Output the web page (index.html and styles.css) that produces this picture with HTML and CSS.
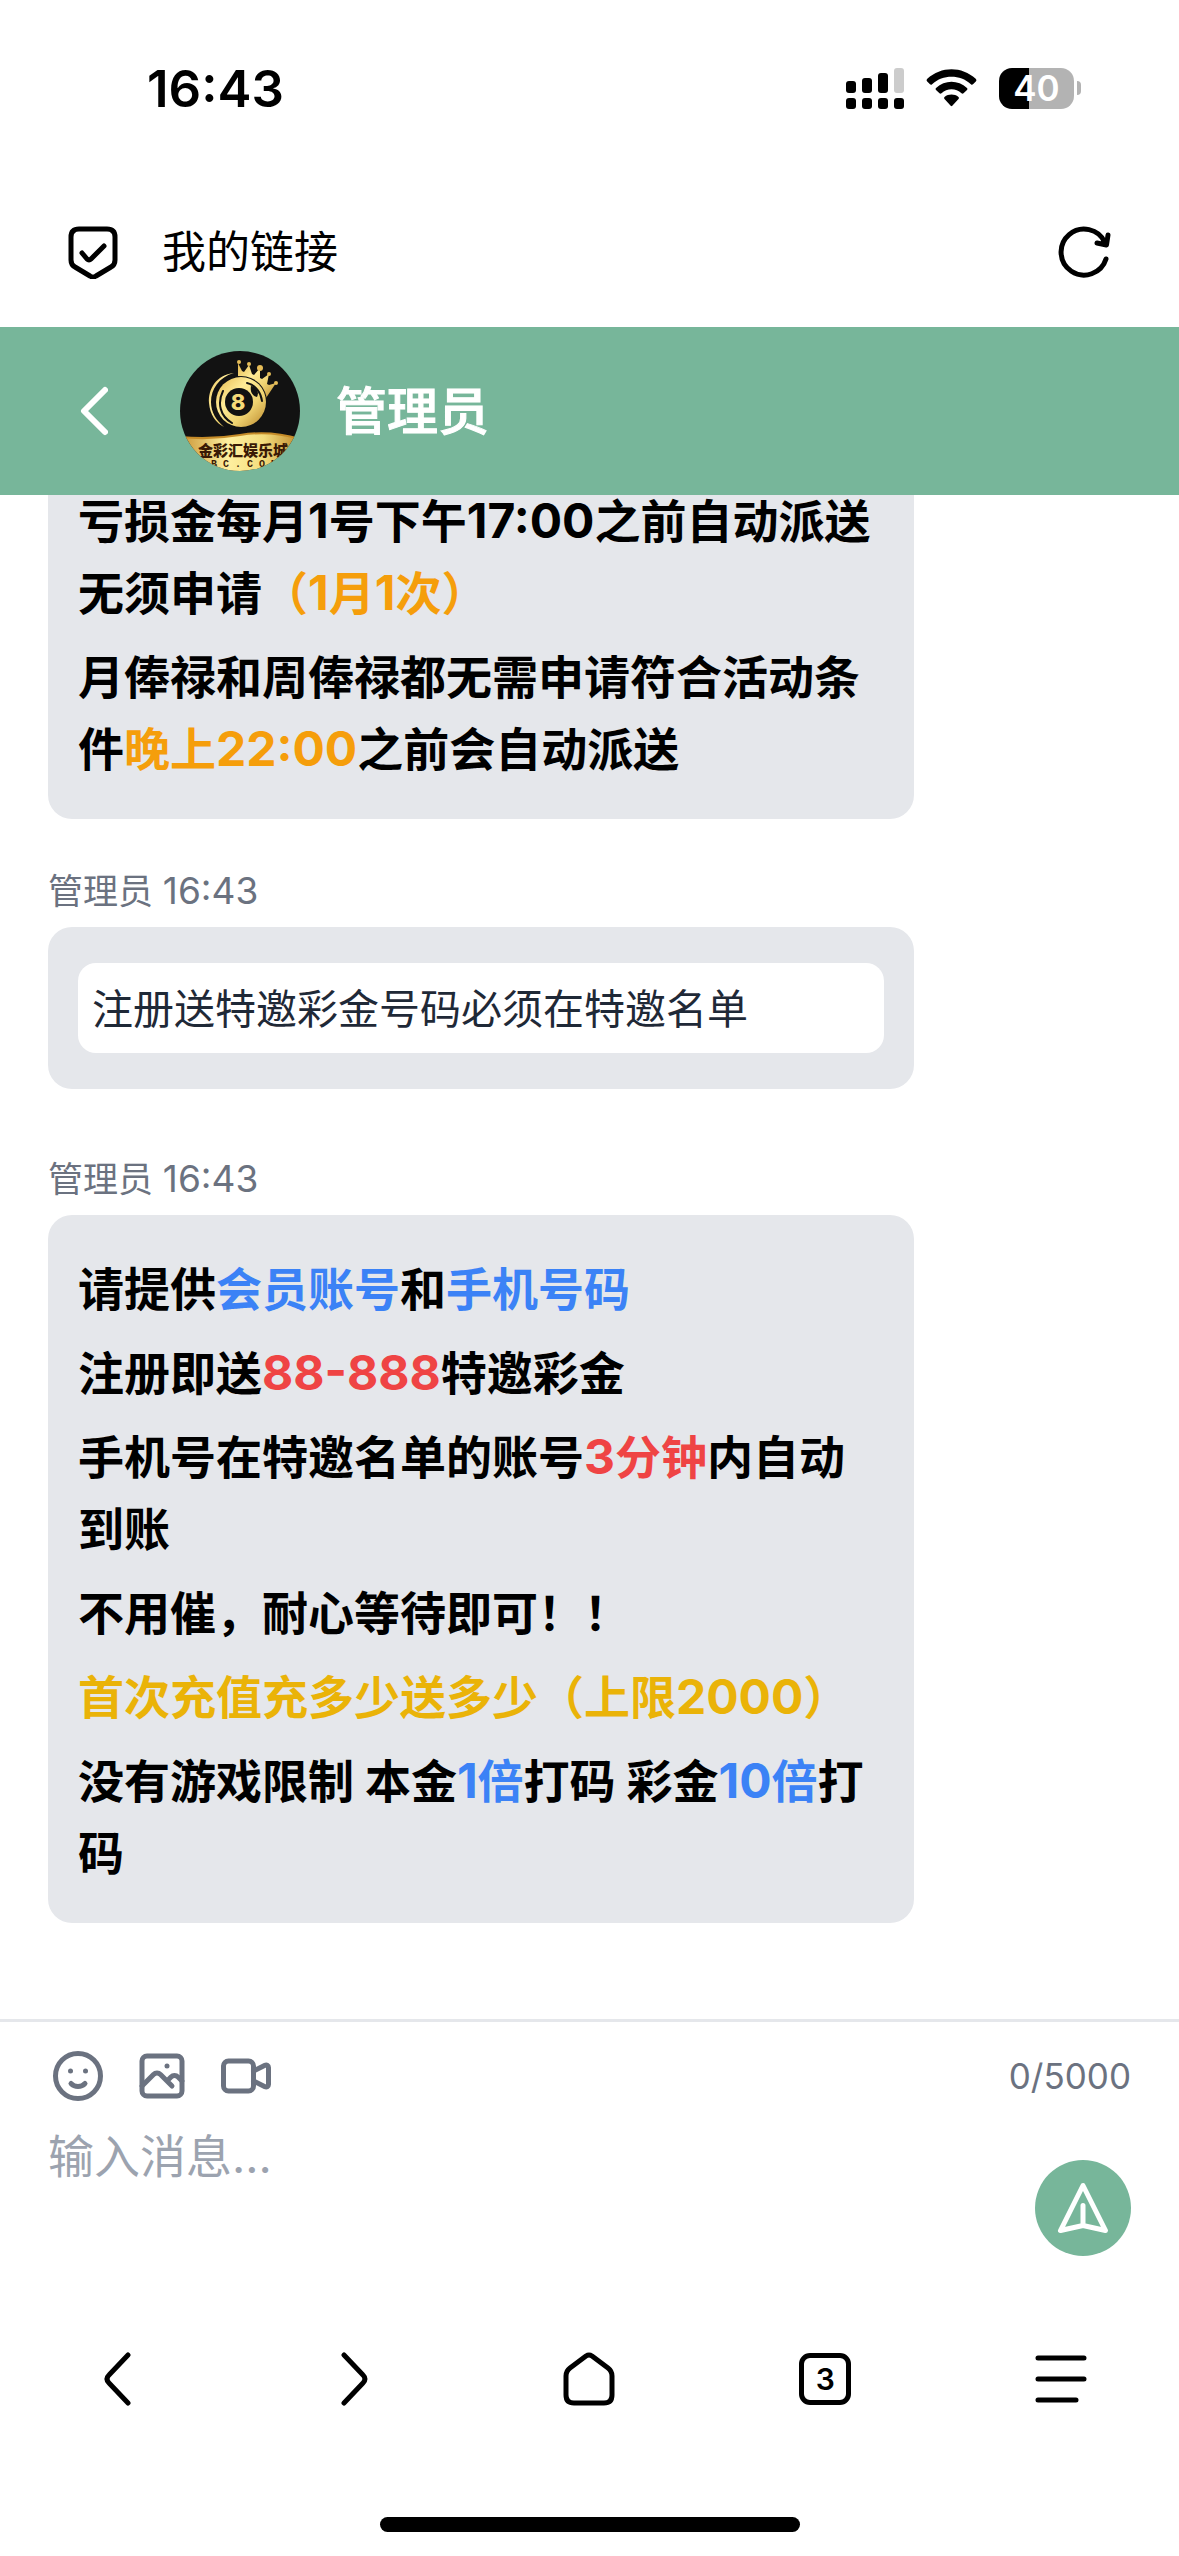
FILE: index.html
```html
<!DOCTYPE html>
<html lang="zh-CN">
<head>
<meta charset="utf-8">
<meta name="viewport" content="width=device-width, initial-scale=1">
<title>管理员</title>
<link rel="stylesheet" href="styles.css">
</head>
<body>
<div class="status-bar">
  <time class="clock">16:43</time>
  <div class="status-icons">
    <svg width="58" height="41" viewBox="0 0 58 41" aria-hidden="true">
      <rect x="0" y="13" width="10" height="12" rx="3"/><rect x="16" y="10" width="10" height="15" rx="3"/><rect x="32" y="5" width="10" height="20" rx="3"/><rect x="48" y="0" width="10" height="25" rx="3" fill="#ccc"/>
      <rect x="0" y="30" width="10" height="11" rx="3"/><rect x="16" y="30" width="10" height="11" rx="3"/><rect x="32" y="30" width="10" height="11" rx="3"/><rect x="48" y="30" width="10" height="11" rx="3"/>
    </svg>
    <svg width="51" height="38" viewBox="0 0 51 38" aria-hidden="true">
      <path d="M1.3 9.8Q0 11.3 1.2 12.5L4 15.3Q5 16.2 6.100 15.2C17 5.400 34 5.400 44.900 15.200Q46 16.200 47 15.300L49.800 12.500Q51 11.300 49.700 9.800C36-3 15-3 1.300 9.800Z"/>
      <path d="M10 19Q9 20 10 21L13.500 24.300Q14.400 25 15.500 24.200C21 19 30 19 35.500 24.200Q36.600 25 37.500 24.300L41 21Q42 20 41 19C32 10.800 19 10.800 10 19Z"/>
      <path d="M18.500 28Q17.500 29 18.500 30L24.700 36.800Q25.500 37.500 26.300 36.800L32.500 30Q33.500 29 32.500 28C28.500 24.800 22.500 24.800 18.500 28Z"/>
    </svg>
    <div class="battery"><span class="battery-body">40</span><span class="battery-tip"></span></div>
  </div>
</div>

<div class="address-bar">
  <svg class="line-icon" width="54" height="54" viewBox="0 0 54 54" aria-hidden="true">
    <path d="M13 4H41Q49 4 49 12V35Q49 40 45 42L30 51Q27 53 24 51L9 42Q5 40 5 35V12Q5 4 13 4Z"/><path d="M16 28l5 6q2 2 4 0L38 21"/>
  </svg>
  <h2 class="page-title">我的链接</h2>
  <button class="icon-button" type="button" aria-label="刷新">
    <svg class="line-icon" width="54" height="54" viewBox="0 0 54 54"><path d="M49 34A23 23 0 1 1 48 17.500M51 10L49.500 20L40 18"/></svg>
  </button>
</div>

<header class="chat-header">
  <button class="icon-button" type="button" aria-label="返回">
    <svg class="back-icon" width="30" height="54" viewBox="0 0 30 54"><path d="M27 6L6 27L27 48"/></svg>
  </button>
  <svg class="avatar" width="120" height="120" viewBox="0 0 120 120" role="img" aria-label="金彩汇娱乐城">
    <defs>
      <linearGradient id="gold" x1="0" y1="0" x2="1" y2="1"><stop offset="0" stop-color="#e2b64c"/><stop offset=".35" stop-color="#ffeb96"/><stop offset=".65" stop-color="#f0d371"/><stop offset="1" stop-color="#b8862b"/></linearGradient>
      <linearGradient id="band"><stop offset="0" stop-color="#c99434"/><stop offset=".4" stop-color="#fff0a0"/><stop offset=".7" stop-color="#f3dc7c"/><stop offset="1" stop-color="#c08a2c"/></linearGradient>
      <clipPath id="disc"><circle cx="60" cy="60" r="60"/></clipPath>
    </defs>
    <g clip-path="url(#disc)">
      <rect width="120" height="120" fill="#121212"/>
      <path d="M54 22C36 24 28 38 29 52C30 64 36 72 44 76C36 69 31 61 31 51C31 38 39 26 54 22Z" fill="url(#gold)"/>
      <path d="M58 25L58 12L62 20L64 21L69 14L72 23L74 24L80 17L80 27L82 28L89 23L87 33L89 34L96 32L86 47C80 36 70 29 58 25Z" fill="url(#gold)"/>
      <g fill="#e6bd58"><circle cx="59" cy="11" r="2"/><circle cx="69" cy="13" r="2"/><circle cx="80" cy="17" r="3"/><circle cx="89" cy="23" r="2"/><circle cx="96" cy="32" r="2"/></g>
      <circle cx="61" cy="51" r="26" fill="#121212"/>
      <circle cx="61" cy="51" r="25" fill="url(#gold)"/>
      <path d="M43 40C37 52 40 65 52 72M67 32C76 34 81 42 82 50" fill="none" stroke="#121212" stroke-width="2" stroke-linecap="round"/>
      <path d="M71 35C78 36 79 42 77 46C72 45 70 40 71 35Z" fill="#121212"/>
      <circle cx="59" cy="51" r="14" fill="#121212"/>
      <text x="58" y="59" class="avatar-number">8</text>
      <path d="M0 86Q30 89 60 84T120 88V120H0Z" fill="url(#band)"/>
      <path d="M0 86Q30 89 60 84T120 88" fill="none" stroke="#c58b28" stroke-width="2"/>
      <text x="18" y="105" class="avatar-name">金彩汇娱乐城</text>
      <text x="19" y="116" class="avatar-domain">B B C . C O M</text>
    </g>
  </svg>
  <h1 class="contact-name">管理员</h1>
</header>

<main class="chat">
  <article class="message">
    <div class="bubble">
      <p>亏损金每月<span class="num">1</span>号下午<span class="num">17:00</span>之前自动派送无须申请<span class="orange">（<span class="num">1</span>月<span class="num">1</span>次）</span></p>
      <p>月俸禄和周俸禄都无需申请符合活动条件<span class="orange">晚上<span class="num">22:00</span></span>之前会自动派送</p>
    </div>
  </article>
  <article class="message message-with-card">
    <div class="meta">管理员 <time class="meta-time">16:43</time></div>
    <div class="bubble"><div class="card">注册送特邀彩金号码必须在特邀名单</div></div>
  </article>
  <article class="message">
    <div class="meta">管理员 <time class="meta-time">16:43</time></div>
    <div class="bubble">
      <p>请提供<span class="blue">会员账号</span>和<span class="blue">手机号码</span></p>
      <p>注册即送<span class="red num">88-888</span>特邀彩金</p>
      <p>手机号在特邀名单的账号<span class="red"><span class="num">3</span>分钟</span>内自动到账</p>
      <p>不用催，耐心等待即可！！</p>
      <p class="yellow">首次充值充多少送多少（上限<span class="num">2000</span>）</p>
      <p>没有游戏限制 本金<span class="blue"><span class="num">1</span>倍</span>打码 彩金<span class="blue"><span class="num">10</span>倍</span>打码</p>
    </div>
  </article>
</main>

<form class="composer">
  <div class="tools">
    <button class="icon-button" type="button" aria-label="表情">
      <svg class="tool-icon" viewBox="0 0 24 24"><circle cx="12" cy="12" r="9"/><path d="M9.200 15C10.700 16.600 13.300 16.600 14.800 15"/><g class="dots"><circle cx="9" cy="10" r="1"/><circle cx="15" cy="10" r="1"/></g></svg>
    </button>
    <button class="icon-button" type="button" aria-label="图片">
      <svg class="tool-icon" viewBox="0 0 24 24"><rect x="4" y="4" width="16" height="16" rx="2"/><path d="M4 16L8.600 11.400A2 2 0 0 1 11.400 11.400L16 16M14 14L15.600 12.400A2 2 0 0 1 18.400 12.400L20 14"/><g class="dots"><circle cx="14" cy="8" r="1"/></g></svg>
    </button>
    <button class="icon-button" type="button" aria-label="视频">
      <svg class="tool-icon" viewBox="0 0 24 24"><rect x="3" y="6" width="12" height="12" rx="2"/><path d="M15 10L19.600 7.700A1 1 0 0 1 21 8.600V15.400A1 1 0 0 1 19.600 16.300L15 14"/></svg>
    </button>
    <span class="counter">0/5000</span>
  </div>
  <div class="entry">
    <textarea class="message-input" aria-label="输入消息" placeholder="输入消息..."></textarea>
    <button class="send" type="submit" aria-label="发送">
      <svg width="60" height="60" viewBox="0 0 24 24"><path d="M12 19L21 21L12 3L3 21L12 19ZM12 19V11"/></svg>
    </button>
  </div>
</form>

<nav class="browser-nav" aria-label="浏览器">
  <button class="icon-button" type="button" aria-label="后退"><svg class="line-icon" width="54" height="54" viewBox="0 0 54 54"><path d="M37 3L18 23Q14 27 18 31L37 51"/></svg></button>
  <button class="icon-button" type="button" aria-label="前进"><svg class="line-icon" width="54" height="54" viewBox="0 0 54 54"><path d="M17 3L36 23Q40 27 36 31L17 51"/></svg></button>
  <button class="icon-button" type="button" aria-label="主页"><svg class="line-icon" width="54" height="54" viewBox="0 0 54 54"><path d="M24 4Q27 2 30 4L46 16Q50 19 50 24V43Q50 51 42 51H12Q4 51 4 43V24Q4 19 8 16Z"/></svg></button>
  <button class="tab-count" type="button" aria-label="标签页">3</button>
  <button class="icon-button" type="button" aria-label="菜单"><svg class="line-icon" width="54" height="54" viewBox="0 0 54 54"><path d="M4 6H50M4 27H50M4 48H42"/></svg></button>
</nav>
<div class="home-indicator"></div>
</body>
</html>
```

FILE: styles.css
```css
* {
  box-sizing: border-box;
}

body {
  display: flex;
  flex-direction: column;
  height: 100vh;
  margin: 0;
  background: #fff;
  color: #000;
  font-family: Inter, "Noto Sans CJK SC", sans-serif;
}

h1,
h2,
p {
  margin: 0;
}

button {
  padding: 0;
  border: 0;
  background: none;
  color: inherit;
  font: inherit;
}

svg {
  display: block;
}

.icon-button {
  display: flex;
  align-items: center;
  justify-content: center;
}

.line-icon {
  fill: none;
  stroke: #000;
  stroke-width: 5;
  stroke-linecap: round;
  stroke-linejoin: round;
}

/* Phone status bar */
.status-bar {
  display: flex;
  flex: none;
  align-items: center;
  justify-content: space-between;
  height: 176px;
  padding: 0 98px 0 147px;
}

.clock {
  font-size: 51px;
  font-weight: 600;
}

.status-icons,
.battery {
  display: flex;
  align-items: center;
}

.status-icons {
  gap: 22px;
}

.battery {
  gap: 3px;
}

.battery-body {
  width: 75px;
  border-radius: 13px;
  background: linear-gradient(to right, #000 40%, #b3b3b3 40%);
  color: #fff;
  font-size: 35px;
  font-weight: 600;
  line-height: 41px;
  text-align: center;
}

.battery-tip {
  width: 4px;
  height: 14px;
  border-radius: 0 4px 4px 0;
  background: #b3b3b3;
}

/* Browser address bar */
.address-bar {
  display: flex;
  flex: none;
  align-items: center;
  height: 151px;
  padding: 0 68px 0 66px;
}

.page-title {
  flex: 1;
  margin-left: 42px;
  padding-bottom: 6px;
  font-size: 44px;
  font-weight: 400;
}

/* Chat header */
.chat-header {
  display: flex;
  flex: none;
  align-items: center;
  height: 168px;
  padding: 0 78px;
  background: #77b69a;
  color: #fff;
}

.back-icon {
  fill: none;
  stroke: #fff;
  stroke-width: 6;
  stroke-linecap: round;
  stroke-linejoin: round;
}

.avatar {
  margin-left: 72px;
}

.avatar-number {
  fill: #f5da78;
  font-size: 22px;
  font-weight: 800;
  text-anchor: middle;
}

.avatar-name {
  fill: #3a1a05;
  font-size: 15px;
  font-weight: 900;
}

.avatar-domain {
  fill: #3a1a05;
  font-family: "Liberation Mono", monospace;
  font-size: 10px;
  font-weight: 700;
}

.contact-name {
  margin-left: 36px;
  padding-bottom: 6px;
  font-size: 51px;
  font-weight: 500;
  -webkit-text-stroke: 1px #fff;
}

/* Conversation, kept scrolled to the newest message */
.chat {
  display: flex;
  flex: 1;
  flex-direction: column;
  justify-content: flex-end;
  gap: 48px;
  min-height: 0;
  padding: 0 48px 96px;
  overflow: hidden;
}

.message {
  width: 80%;
}

.message-with-card {
  margin-bottom: 18px;
}

.meta {
  margin-bottom: 12px;
  color: #6b7280;
  font-size: 35px;
  line-height: 48px;
}

.meta-time {
  font-size: 37px;
}

.bubble {
  padding: 38px 30px 34px;
  border-radius: 24px;
  background: #e5e7eb;
  font-size: 46px;
  font-weight: 700;
  line-height: 72px;
}

.bubble p + p {
  margin-top: 12px;
}

/* Figures are set slightly larger than the Chinese text around them */
.num {
  font-size: 48px;
  line-height: 1;
}

.message-with-card .bubble {
  padding: 36px 30px;
}

.card {
  padding: 2px 14px 0;
  border-radius: 18px;
  background: #fff;
  color: #1f2937;
  font-size: 41px;
  font-weight: 400;
  line-height: 88px;
}

.orange {
  color: #f59e0b;
}

.blue {
  color: #3b82f6;
}

.red {
  color: #ef4444;
}

.yellow {
  color: #eab308;
}

/* Message composer */
.composer {
  flex: none;
  padding: 24px 48px;
  border-top: 3px solid #e5e7eb;
}

.tools {
  display: flex;
  align-items: center;
  gap: 24px;
}

.tool-icon {
  width: 60px;
  height: 60px;
  fill: none;
  stroke: #6b7280;
  stroke-width: 2;
  stroke-linecap: round;
  stroke-linejoin: round;
}

.dots {
  fill: #6b7280;
  stroke: none;
}

.counter {
  margin-left: auto;
  color: #6b7280;
  font-size: 35px;
}

.entry {
  display: flex;
  align-items: flex-end;
  margin-top: 15px;
}

.message-input {
  flex: 1;
  height: 135px;
  padding: 0;
  border: 0;
  outline: 0;
  background: none;
  font: inherit;
  font-size: 46px;
  line-height: 70px;
  resize: none;
}

.message-input::placeholder {
  color: #9ca3af;
}

.send {
  display: grid;
  width: 96px;
  height: 96px;
  border-radius: 50%;
  background: #77b69a;
  place-items: center;
}

.send svg {
  fill: none;
  stroke: #fff;
  stroke-width: 2;
  stroke-linecap: round;
  stroke-linejoin: round;
}

/* Browser navigation */
.browser-nav {
  display: grid;
  flex: none;
  grid-template-columns: repeat(5, 1fr);
  height: 198px;
  place-items: center;
}

.tab-count {
  width: 52px;
  height: 52px;
  border: 5px solid #000;
  border-radius: 11px;
  font-size: 30px;
  font-weight: 600;
  line-height: 42px;
  text-align: center;
}

.home-indicator {
  flex: none;
  width: 420px;
  height: 15px;
  margin: 39px auto 24px;
  border-radius: 8px;
  background: #000;
}
```
